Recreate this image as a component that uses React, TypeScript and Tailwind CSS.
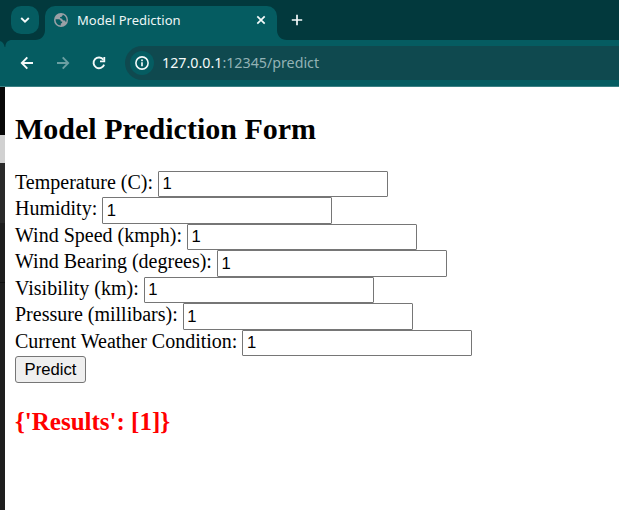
import React from "react";

const fields = [
  "Temperature (C):",
  "Humidity:",
  "Wind Speed (kmph):",
  "Wind Bearing (degrees):",
  "Visibility (km):",
  "Pressure (millibars):",
  "Current Weather Condition:",
];

function TabStrip() {
  return (
    <div className="flex h-10 items-end bg-[#02393d] pl-[11px]">
      <button className="mb-1.5 flex h-7 w-7 items-center justify-center rounded-[10px] bg-[#055c61]" aria-label="Search tabs">
        <svg width="28" height="28" viewBox="0 0 28 28" fill="none" stroke="#f4fafa" strokeWidth="1.9">
          <path d="M10.2 12 14 15.7 17.8 12" />
        </svg>
      </button>
      <svg className="-ml-1" width="10" height="10" viewBox="0 0 10 10">
        <path d="M10 0V10H0C6 10 10 6 10 0Z" fill="#055c61" />
      </svg>
      <div className="flex h-[34px] w-[232px] items-center rounded-t-[10px] bg-[#055c61] pb-[6px] pl-[9px] pr-[9px]">
        <svg width="14" height="14" viewBox="0 0 14 14">
          <circle cx="7" cy="7" r="7" fill="#9aa0a6" />
          <path d="M1.6 6.2 4.8 6.3C6.2 6.4 6.8 7.2 6.7 8.4L8.2 8.5C8.4 9.8 7.8 10.3 6.8 10.4L6.7 12.4C3.8 12.4 1.4 9.8 1.6 6.2ZM8.8 1.8C11 2.6 12.5 4.6 12.5 7.1 12.5 7.9 12.3 8.6 12 9.2 11.5 8.9 11.3 8.3 11.2 7.5 9.2 7.6 8.2 7 8.2 5.7 6.6 5.7 5.9 5 6.1 4.1 7.5 4 8.5 3.6 8.8 1.8Z" fill="#055c61" />
        </svg>
        <span className="ml-[9px] flex-1 whitespace-nowrap font-['Noto_Sans',sans-serif] text-[13px] leading-5 text-[#edf6f6]">Model Prediction</span>
        <svg width="14" height="14" viewBox="0 0 14 14" stroke="#f4fafa" strokeWidth="1.7">
          <path d="M3.3 3.3 10.7 10.7M10.7 3.3 3.3 10.7" />
        </svg>
      </div>
      <svg width="10" height="10" viewBox="0 0 10 10">
        <path d="M0 0V10H10C4 10 0 6 0 0Z" fill="#055c61" />
      </svg>
      <svg className="mb-[13px] ml-[3px]" width="14" height="14" viewBox="0 0 14 14" stroke="#f4fafa" strokeWidth="1.7">
        <path d="M7 1.8V12.2M1.8 7H12.2" />
      </svg>
    </div>
  );
}

function Toolbar() {
  return (
    <div className="flex h-[47px] border-b border-[#3b8083] bg-[#055c61]">
      <svg className="shrink-0" width="125" height="46" viewBox="0 0 125 46" fill="none">
        <path d="M0 0H12C8 0 5.5 2.5 5.3 7H4.7C4 3.5 2.5 1.5 0 1Z" fill="#02393d" />
        <path d="M33 23H22M27.3 17.3 21.8 23 27.3 28.7" stroke="#f4fafa" strokeWidth="1.9" />
        <path d="M57 23H68M62.7 17.3 68.2 23 62.7 28.7" stroke="#6b9fa2" strokeWidth="1.9" />
        <path d="M103.4 19.8A5.4 5.4 0 1 0 104.1 24.6" stroke="#f4fafa" strokeWidth="1.9" />
        <path d="M105.2 17V22.2H100V20.4H103.4V17Z" fill="#f4fafa" />
      </svg>
      <div className="mt-1.5 flex h-[34px] flex-1 items-center rounded-l-full bg-[#0f494f] pl-[5px]">
        <div className="flex h-6 w-6 items-center justify-center rounded-full bg-[#055c61]">
          <svg width="14" height="14" viewBox="0 0 14 14" fill="none" stroke="#f4fafa">
            <circle cx="7" cy="7" r="6.1" strokeWidth="1.6" />
            <path d="M7 6.2V10.3M7 3.6V5.2" strokeWidth="1.7" />
          </svg>
        </div>
        <span className="ml-2 font-['Noto_Sans',sans-serif] text-[14.25px] leading-5 text-[#93b2b5]">
          <span className="text-[#f4fafa]">127.0.0.1</span>:12345/predict
        </span>
      </div>
    </div>
  );
}

export default function App() {
  return (
    <div className="flex h-[510px] w-[619px] flex-col overflow-hidden bg-white">
      <TabStrip />
      <Toolbar />
      <div className="flex flex-1">
        <div className="flex w-[5px] shrink-0 flex-col bg-[#1e1e1e]">
          <div className="h-12 bg-[#080808]" />
          <div className="h-7 bg-[#d1d1d1]" />
          <div className="h-[60px] bg-[#2a2a2a]" />
          <div className="h-[60px] border-b border-[#101010]" />
        </div>
        <main className="flex-1 pl-2.5 font-['Liberation_Serif',serif] text-black">
          <h2 className="pt-[25px] text-[30px] font-bold leading-[34px]">Model Prediction Form</h2>
          <form className="pt-[24.75px]" onSubmit={(e) => e.preventDefault()}>
            {fields.map((label) => (
              <label key={label} className="flex h-[26.5px] items-start gap-[5px] text-[20px] leading-[22px]">
                <span className="whitespace-nowrap">{label}</span>
                <input
                  defaultValue="1"
                  className="h-[26.5px] w-[230px] rounded-[1px] border border-[#767676] bg-white px-[3.5px] py-0 font-['Liberation_Sans',sans-serif] text-[16.667px] text-black outline-none"
                />
              </label>
            ))}
            <button className="block h-[27px] w-[71px] rounded-[3px] border border-[#767676] bg-[#efefef] font-['Liberation_Sans',sans-serif] text-[16.667px] leading-[25px]">
              Predict
            </button>
          </form>
          <h3 className="mt-[24.75px] text-[25px] font-bold leading-[28px] text-[#ff0000]">{"{'Results': [1]}"}</h3>
        </main>
      </div>
    </div>
  );
}
